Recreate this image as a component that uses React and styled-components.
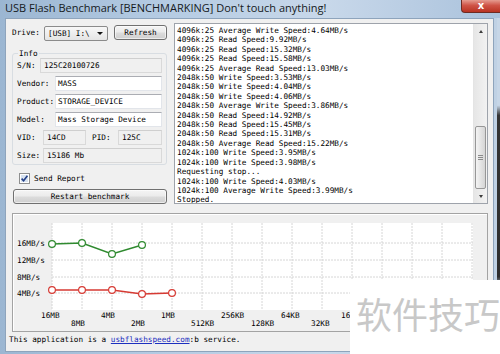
import React from "react"
import styled, { createGlobalStyle } from "styled-components"

const mono = `"DejaVu Sans Mono", "Liberation Mono", monospace`

const GlobalStyle = createGlobalStyle`
  html, body {
    margin: 0;
    padding: 0;
  }
  body {
    width: 500px;
    height: 354px;
    overflow: hidden;
    background: #f0f0f0;
  }
`

const Window = styled.div`
  position: relative;
  width: 500px;
  height: 354px;
  overflow: hidden;
  display: flex;
  flex-direction: column;
  background: linear-gradient(90deg, #9bb6d2 0%, #b3cae2 30%, #c8d8ea 65%, #aac2dc 100%);
  font-family: ${mono};
  font-size: 7.7px;
  color: #000;
`

const TitleBar = styled.div`
  flex: none;
  height: 18px;
  display: flex;
  justify-content: space-between;
  padding-left: 5px;
`

const Title = styled.span`
  font-family: "Open Sans", "Noto Sans", sans-serif;
  font-size: 11px;
  line-height: 16px;
  color: #151a22;
`

const CloseButton = styled.div`
  width: 38px;
  height: 12px;
  border: 1px solid #6e2b22;
  border-top: none;
  border-right: none;
  border-radius: 0 0 0 4px;
  background: linear-gradient(#e59c90, #cf5447 45%, #b93322);
  display: flex;
  align-items: center;
  justify-content: center;
  color: #fff;
  font-family: "DejaVu Sans", sans-serif;
  font-weight: bold;
  font-size: 10px;
  line-height: 1;
`

const Frame = styled.div`
  flex: 1;
  min-height: 0;
  display: flex;
  padding-left: 5px;
  padding-bottom: 2px;
`

const RightEdge = styled.div`
  flex: none;
  width: 6px;
  margin-bottom: -2px;
  background:
    linear-gradient(90deg, #bfd1e4 0, #bfd1e4 3px, transparent 3px),
    linear-gradient(180deg, #c6d6e7 0, #c6d6e7 26%, #343434 29%, #2e2e2e 77%, #aebccb 80%);
`

const Body = styled.div`
  flex: 1;
  min-width: 0;
  background: #f0f0f0;
  border: 1px solid #8ea4bc;
  padding: 4px 4px 0 6px;
  display: flex;
  flex-direction: column;
`

const TopRow = styled.div`
  display: flex;
  gap: 7px;
  height: 181px;
`

const LeftCol = styled.div`
  width: 155px;
  display: flex;
  flex-direction: column;
`

const DriveRow = styled.div`
  display: flex;
  align-items: center;
  height: 18px;
  margin-top: 1px;
`

const Label = styled.span`
  flex: none;
  width: ${(p) => p.$w}px;
  white-space: pre;
`

const Combo = styled.div`
  width: 64px;
  height: 15px;
  box-sizing: border-box;
  border: 1px solid #8b8b8b;
  border-radius: 2px;
  background: linear-gradient(#f8f8f8, #e4e4e4);
  display: flex;
  align-items: center;
  justify-content: space-between;
  padding: 0 4px 0 3px;
  margin-top: 1px;
`

const ComboArrow = styled.span`
  width: 0;
  height: 0;
  border-left: 3px solid transparent;
  border-right: 3px solid transparent;
  border-top: 3px solid #111;
`

const Button = styled.div`
  box-sizing: border-box;
  width: ${(p) => p.$w}px;
  height: 15px;
  margin-left: ${(p) => p.$ml || 0}px;
  border: 1px solid #707070;
  border-radius: 3px;
  background: linear-gradient(#f4f4f4 0%, #ebebeb 48%, #dcdcdc 52%, #cfcfcf 100%);
  box-shadow: inset 0 0 0 1px rgba(255, 255, 255, 0.6);
  display: flex;
  align-items: center;
  justify-content: center;
  margin-top: ${(p) => p.$mt || 0}px;
`

const InfoGroup = styled.fieldset`
  margin: 8px 0 0;
  padding: 0 4px 1px 4px;
  border: 1px solid #d8dde2;
  border-radius: 3px;
  display: grid;
  grid-auto-rows: 15px;
  row-gap: 3px;
  min-width: 0;
`

const Legend = styled.legend`
  padding: 0 1px;
  margin-left: 1px;
  line-height: 9px;
`

const FieldRow = styled.div`
  display: flex;
  align-items: center;
`

const Value = styled.div`
  box-sizing: border-box;
  height: 15px;
  flex: ${(p) => (p.$w ? "none" : 1)};
  width: ${(p) => (p.$w ? `${p.$w}px` : "auto")};
  margin-right: ${(p) => p.$mr || 0}px;
  display: flex;
  align-items: center;
  padding-left: ${(p) => (p.$readonly ? 3 : 2)}px;
  white-space: pre;
  background: ${(p) => (p.$readonly ? "#f0f0f0" : "#fff")};
  border: 1px solid ${(p) => (p.$readonly ? "#d9d9d9" : "#e2e5ea")};
  border-top-color: ${(p) => (p.$readonly ? "#cfcfcf" : "#abadb3")};
`

const CheckRow = styled.div`
  display: flex;
  align-items: center;
  gap: 4px;
  height: 10px;
  margin: 8px 0 0 7px;
`

const LogBox = styled.div`
  width: 314px;
  box-sizing: border-box;
  border: 1px solid #9ea3ab;
  background: #fff;
  display: flex;
  overflow: hidden;
`

const LogText = styled.div`
  flex: 1;
  padding: 2px 0 0 2px;
  white-space: pre;
  line-height: 9.4px;
  overflow: hidden;
`

const ScrollBar = styled.div`
  flex: none;
  width: 13px;
  display: flex;
  flex-direction: column;
  background: linear-gradient(90deg, #e6e6e6, #f2f2f2);
  border-left: 1px solid #e4e4e4;
`

const ArrowCell = styled.div`
  height: 14px;
  display: flex;
  align-items: center;
  justify-content: center;
`

const Arrow = styled.span`
  width: 0;
  height: 0;
  border-left: 2.5px solid transparent;
  border-right: 2.5px solid transparent;
  ${(p) => (p.$up ? "border-bottom: 3px solid #3c3c3c;" : "border-top: 3px solid #3c3c3c;")}
`

const Track = styled.div`
  flex: 1;
  display: flex;
  flex-direction: column;
  justify-content: flex-end;
`

const Thumb = styled.div`
  height: 63px;
  margin: 0 1px;
  box-sizing: border-box;
  border: 1px solid #979797;
  border-radius: 2px;
  background: linear-gradient(90deg, #f4f4f4, #e3e3e3 55%, #d5d5d5);
  display: flex;
  flex-direction: column;
  align-items: center;
  justify-content: center;
  gap: 1px;
`

const Grip = styled.span`
  width: 5px;
  height: 1px;
  background: #8a8a8a;
`

const ChartGroup = styled.div`
  margin-top: 9px;
  width: 476px;
  height: 119px;
  box-sizing: border-box;
  border: 1px solid #a3a3a3;
  box-shadow: inset 1px 1px 0 #fff;
`

const Status = styled.div`
  margin: 2px 0 0 -3px;
  line-height: 12px;
  white-space: pre;
`

const Link = styled.span`
  color: #1c2fbf;
  text-decoration: underline;
`

const Watermark = styled.div`
  position: absolute;
  right: 0;
  bottom: 0;
  width: 150px;
  height: 74px;
  background: #fff;
  box-sizing: border-box;
  padding: 15px 0 0 6px;
  font-family: "Noto Sans CJK SC", sans-serif;
  font-size: 36px;
  line-height: 36px;
  color: #c8c8c8;
  white-space: nowrap;
`

const logLines = [
  "4096k:25 Average Write Speed:4.64MB/s",
  "4096k:25 Read Speed:9.92MB/s",
  "4096k:25 Read Speed:15.32MB/s",
  "4096k:25 Read Speed:15.58MB/s",
  "4096k:25 Average Read Speed:13.03MB/s",
  "2048k:50 Write Speed:3.53MB/s",
  "2048k:50 Write Speed:4.04MB/s",
  "2048k:50 Write Speed:4.06MB/s",
  "2048k:50 Average Write Speed:3.86MB/s",
  "2048k:50 Read Speed:14.92MB/s",
  "2048k:50 Read Speed:15.45MB/s",
  "2048k:50 Read Speed:15.31MB/s",
  "2048k:50 Average Read Speed:15.22MB/s",
  "1024k:100 Write Speed:3.95MB/s",
  "1024k:100 Write Speed:3.98MB/s",
  "Requesting stop...",
  "1024k:100 Write Speed:4.03MB/s",
  "1024k:100 Average Write Speed:3.99MB/s",
  "Stopped.",
]

// chart geometry, in svg coords (svg sits inside the group border)
const gridXs = Array.from({ length: 15 }, (_, i) => 39 + i * 30)
const gridYs = [29, 46, 63, 79]
// the labels past 16KB sit under the watermark in the shot
const xLabels = ["16MB", "8MB", "4MB", "2MB", "1MB", "512KB", "256KB", "128KB", "64KB", "32KB", "16KB"]
const yLabels = [["16MB/s", 29], ["12MB/s", 46], ["8MB/s", 63], ["4MB/s", 79]]
const readSeries = [[39, 30], [69, 29], [99, 40], [129, 31]]
const writeSeries = [[39, 76], [69, 76], [99, 76], [129, 80], [159, 79]]

function Series({ points, color }) {
  return (
    <g>
      <polyline
        points={points.map((p) => p.join(",")).join(" ")}
        fill="none"
        stroke={color}
        strokeWidth="1.6"
      />
      {points.map(([x, y]) => (
        <circle key={x} cx={x} cy={y} r="3.4" fill="#fff" stroke={color} strokeWidth="1.2" />
      ))}
    </g>
  )
}

function Chart() {
  const text = { fontFamily: "DejaVu Sans Mono, Liberation Mono, monospace", fontSize: 7.7, fill: "#000" }
  return (
    <svg width="474" height="117" style={{ display: "block" }}>
      <rect x="39" y="9" width="421" height="87" fill="#fff" />
      {gridXs.map((x) => (
        <line key={x} x1={x} y1="9" x2={x} y2="96" stroke="#d6d6d6" strokeDasharray="2 1" />
      ))}
      {gridYs.map((y) => (
        <line key={y} x1="39" y1={y} x2="460" y2={y} stroke="#d6d6d6" strokeDasharray="2 1" />
      ))}
      {yLabels.map(([t, y]) => (
        <text key={t} x="4" y={y} dominantBaseline="central" {...text}>{t}</text>
      ))}
      {xLabels.map((t, i) => (
        <text key={t} x={gridXs[i] - 11} y={i % 2 ? 109 : 101} dominantBaseline="central" {...text}>{t}</text>
      ))}
      <Series points={readSeries} color="#2f8a2f" />
      <Series points={writeSeries} color="#d63a33" />
    </svg>
  )
}

function CheckIcon() {
  return (
    <svg width="11" height="11" viewBox="0 0 11 11" style={{ display: "block" }}>
      <rect x="0.5" y="0.5" width="10" height="10" fill="#fff" stroke="#8e8f8f" />
      <rect x="2" y="2" width="7" height="7" fill="#d8e3f0" />
      <path d="M2.6 5.6 L4.6 7.8 L8.4 2.8" fill="none" stroke="#233f86" strokeWidth="1.6" />
    </svg>
  )
}

export default function App() {
  return (
    <>
      <GlobalStyle />
      <Window>
        <TitleBar>
          <Title>USB Flash Benchmark [BENCHMARKING] Don't touch anything!</Title>
          <CloseButton>x</CloseButton>
        </TitleBar>
        <Frame>
          <Body>
            <TopRow>
              <LeftCol>
                <DriveRow>
                  <Label $w={32}>Drive:</Label>
                  <Combo>
                    <span>[USB] I:\</span>
                    <ComboArrow />
                  </Combo>
                  <Button $w={53} $ml={6}>Refresh</Button>
                </DriveRow>

                <InfoGroup>
                  <Legend>Info</Legend>
                  <FieldRow>
                    <Label $w={23}>S/N:</Label>
                    <Value $readonly>125C20100726</Value>
                  </FieldRow>
                  <FieldRow>
                    <Label $w={38}>Vendor:</Label>
                    <Value>MASS</Value>
                  </FieldRow>
                  <FieldRow>
                    <Label $w={38}>Product:</Label>
                    <Value>STORAGE_DEVICE</Value>
                  </FieldRow>
                  <FieldRow>
                    <Label $w={38}>Model:</Label>
                    <Value>Mass Storage Device</Value>
                  </FieldRow>
                  <FieldRow>
                    <Label $w={26}>VID:</Label>
                    <Value $readonly $w={43} $mr={6}>14CD</Value>
                    <Label $w={26}>PID:</Label>
                    <Value $readonly>125C</Value>
                  </FieldRow>
                  <FieldRow>
                    <Label $w={26}>Size:</Label>
                    <Value $readonly>15186 Mb</Value>
                  </FieldRow>
                </InfoGroup>

                <CheckRow>
                  <CheckIcon />
                  <span>Send Report</span>
                </CheckRow>
                <Button $w={154} $ml={1} $mt={6}>Restart benchmark</Button>
              </LeftCol>

              <LogBox>
                <LogText>{logLines.join("\n")}</LogText>
                <ScrollBar>
                  <ArrowCell><Arrow $up /></ArrowCell>
                  <Track>
                    <Thumb>
                      <Grip />
                      <Grip />
                      <Grip />
                    </Thumb>
                  </Track>
                  <ArrowCell><Arrow /></ArrowCell>
                </ScrollBar>
              </LogBox>
            </TopRow>

            <ChartGroup>
              <Chart />
            </ChartGroup>

            <Status>
              This application is a <Link>usbflashspeed.com</Link>:b service.
            </Status>
          </Body>
          <RightEdge />
        </Frame>
        <Watermark>软件技巧</Watermark>
      </Window>
    </>
  )
}
